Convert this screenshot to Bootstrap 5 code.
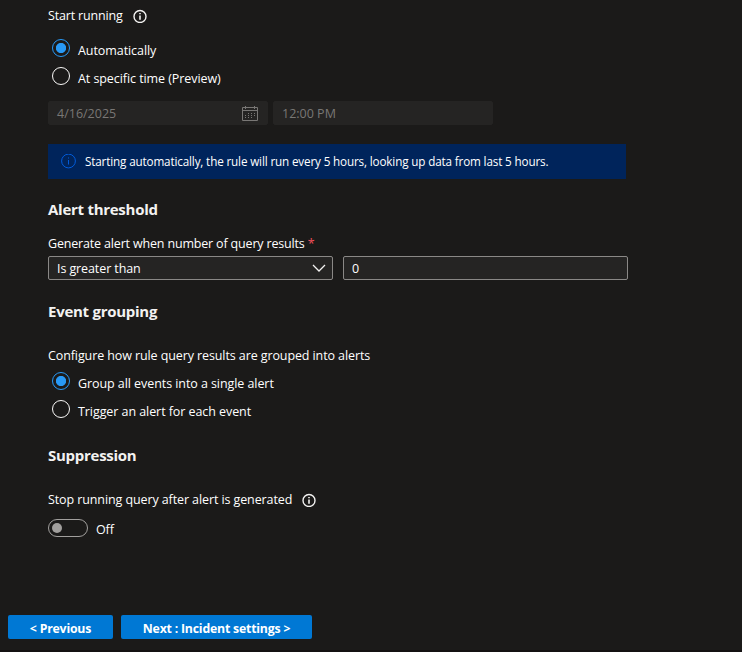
<!DOCTYPE html>
<html lang="en">
<head>
<meta charset="utf-8">
<meta name="viewport" content="width=device-width, initial-scale=1">
<title>Analytics rule wizard</title>
<link href="https://cdn.jsdelivr.net/npm/bootstrap@5.3.0/dist/css/bootstrap.min.css" rel="stylesheet">
<style>
body{background:#1b1a19;color:#fff;font-family:"Open Sans","Noto Sans",sans-serif;font-size:12.5px;line-height:18px;letter-spacing:-.1px;height:652px;overflow:hidden;border-bottom:2px solid #141112}
svg{display:block;flex:none}
.rule-form{padding:7px 0 0 48px;width:628px;height:615px;white-space:nowrap}
.rule-form h2{font-size:15px;line-height:22px;font-weight:700;margin:0;color:#f3f2f1;letter-spacing:-.27px}
.rule-form .h-threshold{margin:19px 0 15px}
.rule-form .h-grouping{margin:20px 0 25px}
.rule-form .h-suppress{margin:26px 0 25px}
.intro{height:18px;gap:10px}
.choices{padding-top:14px}
.choices-near{padding-top:7px}
.form-check.choice{min-height:0;padding:0 0 0 30px;margin:0 0 10px;height:18px}
.choice .form-check-input{appearance:none;width:18px;height:18px;margin:0 0 0 -26px;background:none;border:1px solid #faf9f8;box-shadow:none}
.choice .form-check-input:checked{border-color:#2899f5;background:radial-gradient(circle,#2899f5 0 4.7px,transparent 5.5px)}
.choice label{display:block;padding-top:2px;line-height:20px;letter-spacing:-.07px}
.field{height:24px;border-radius:2px;padding:0 8px;background:#252423;border:1px solid #8a8886;color:#fff;font-size:12.5px;line-height:24px}
input.field{line-height:22px;outline:0}
.field-off{border-color:#252423;color:#797775;width:220px;letter-spacing:0}
.field-row{padding-top:6px;gap:5px}
.pair{gap:10px;margin-top:3px}
.pair .field{width:285px}
.pair .picked{padding-top:2px}
.notice{width:578px;height:35px;margin-top:19px;padding:0 0 0 13px;gap:9px;background:#00245b;font-size:11.7px;letter-spacing:-.15px}
.notice span{padding-bottom:1px}
.required{color:#f1505b}
.tight{letter-spacing:-.17px}
.toggle-row{margin-top:10px;height:18px}
.switch{width:40px;height:18px;border:1px solid #a19f9d;border-radius:9px;padding-left:3px}
.switch span{width:10px;height:10px;border-radius:50%;background:#a19f9d}
.btn.wizard{height:24px;padding:2px 0 0;border:0;border-radius:2px;background:#0078d4;color:#fff;font-size:12.3px;font-weight:700;letter-spacing:-.2px;line-height:24px}
.w-prev{width:105px}
.w-next{width:191px}
</style>
</head>
<body>
<main class="rule-form">
  <div class="d-flex align-items-center intro"><span class="tight">Start running</span>
    <svg width="14" height="14" viewBox="0 0 14 14" fill="none" stroke="#f3f2f1"><circle cx="7" cy="7.5" r="6" stroke-width="1.4"/><path d="M7 6.5v4.3M7 4v1.3" stroke-width="1.6"/></svg></div>
  <div class="choices">
    <div class="form-check choice"><input class="form-check-input" type="radio" name="start" id="auto" checked><label for="auto">Automatically</label></div>
    <div class="form-check choice"><input class="form-check-input" type="radio" name="start" id="timed"><label for="timed">At specific time (Preview)</label></div>
  </div>
  <div class="d-flex field-row">
    <div class="field field-off d-flex justify-content-between"><span>4/16/2025</span>
      <svg width="18" height="18" viewBox="0 0 18 18" class="mt-1" fill="none" stroke="#797775"><path d="M1.5 1.5h15v13h-15zM1.5 4.5h15M4.5 0v3M13.5 0v3"/><path d="M7 7.5h8M4 9.5h11M4 11.5h8" stroke-dasharray="1 2"/></svg></div>
    <div class="field field-off">12:00 PM</div>
  </div>
  <div class="notice d-flex align-items-center">
    <svg width="15" height="15" viewBox="0 0 15 15" fill="none" stroke="#015cda"><circle cx="7.5" cy="7" r="6.9"/><path d="M7.5 6v4.5M7.5 3.5v1"/></svg>
    <span>Starting automatically, the rule will run every 5 hours, looking up data from last 5 hours.</span></div>

  <h2 class="h-threshold">Alert threshold</h2>
  <div class="tight">Generate alert when number of query results <span class="required">*</span></div>
  <div class="d-flex pair">
    <div class="field d-flex justify-content-between align-items-center pe-1"><span class="picked">Is greater than</span>
      <svg width="17" height="10" viewBox="0 0 17 10" fill="none" stroke="#f3f2f1" stroke-width="1.3"><path d="M2 2l6 6 6-6"/></svg></div>
    <input class="field" type="text" value="0" aria-label="Threshold">
  </div>

  <h2 class="h-grouping">Event grouping</h2>
  <div>Configure how rule query results are grouped into alerts</div>
  <div class="choices-near">
    <div class="form-check choice"><input class="form-check-input" type="radio" name="group" id="single" checked><label for="single">Group all events into a single alert</label></div>
    <div class="form-check choice"><input class="form-check-input" type="radio" name="group" id="each"><label for="each">Trigger an alert for each event</label></div>
  </div>

  <h2 class="h-suppress">Suppression</h2>
  <div class="d-flex align-items-center intro"><span>Stop running query after alert is generated</span>
    <svg width="14" height="14" viewBox="0 0 14 14" fill="none" stroke="#f3f2f1"><circle cx="7" cy="7.5" r="6" stroke-width="1.4"/><path d="M7 6.5v4.3M7 4v1.3" stroke-width="1.6"/></svg></div>
  <div class="d-flex align-items-center gap-2 toggle-row"><div class="switch d-flex align-items-center" role="switch" aria-checked="false"><span></span></div><div class="pt-1 mt-n1">Off</div></div>
</main>
<footer class="d-flex gap-2 ps-2">
  <button class="btn wizard w-prev">&lt; Previous</button>
  <button class="btn wizard w-next">Next : Incident settings &gt;</button>
</footer>
<script src="https://cdn.jsdelivr.net/npm/bootstrap@5.3.0/dist/js/bootstrap.bundle.min.js"></script>
</body>
</html>
